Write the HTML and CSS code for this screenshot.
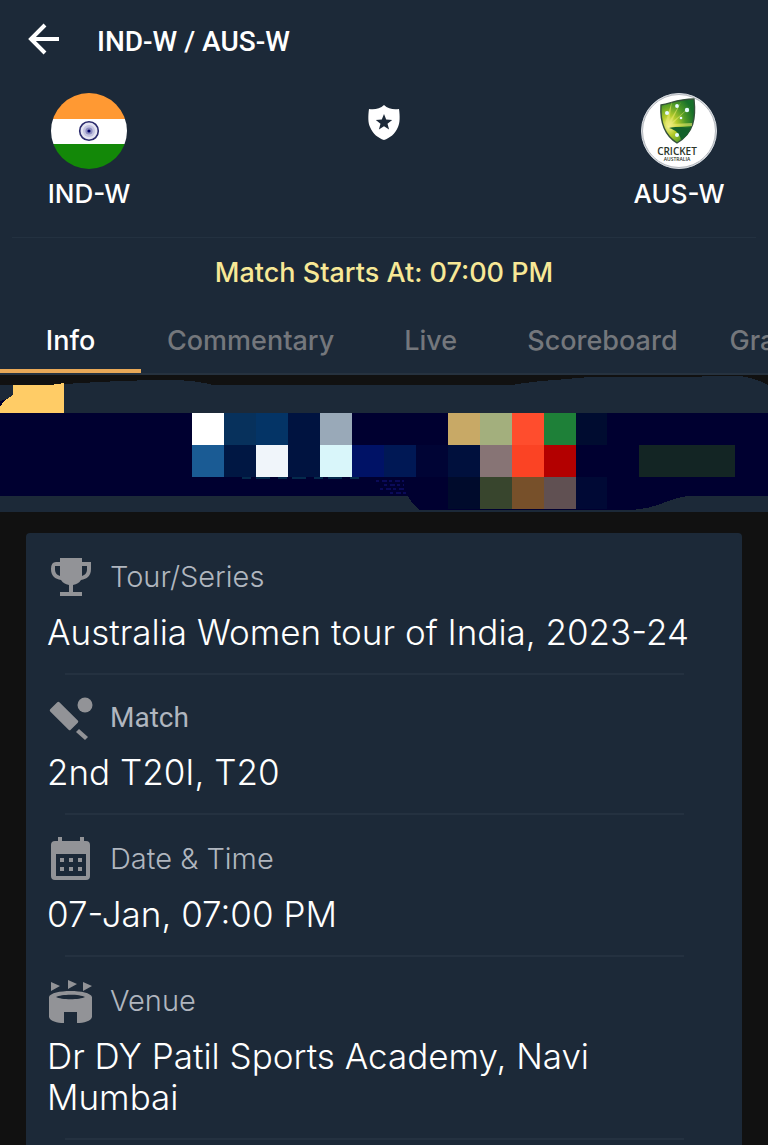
FILE: index.html
```html
<!DOCTYPE html>
<html lang="en">

<head>
    <meta charset="UTF-8">
    <meta name="viewport" content="width=device-width, initial-scale=1.0">
    <title>IND-W / AUS-W</title>
    <link rel="stylesheet" href="styles.css">
</head>

<body>
    <header class="header">
        <!-- Title bar -->
        <div class="topbar">
            <button type="button" class="back-btn" aria-label="Back">
                <svg width="32" height="32" viewBox="0 0 32 32" fill="none" stroke="#fff" stroke-width="4">
                    <path d="M32 16H4M18 2L4 16l14 14" />
                </svg>
            </button>
            <h1 class="title">IND-W / AUS-W</h1>
        </div>

        <!-- Teams -->
        <div class="teams">
            <div class="team">
                <svg class="flag" viewBox="0 0 76 76">
                    <clipPath id="round"><circle cx="38" cy="38" r="38" /></clipPath>
                    <g clip-path="url(#round)">
                        <path fill="#ff9933" d="M0 0h76v26H0z" />
                        <path fill="#fff" d="M0 26h76v25H0z" />
                        <path fill="#138808" d="M0 51h76v25H0z" />
                    </g>
                    <circle cx="38" cy="38" r="9.3" fill="#e4e4f1" stroke="#29296b" stroke-width="1.6" />
                    <circle cx="38" cy="38" r="6" fill="#c3c3e0" />
                    <circle cx="38" cy="38" r="3.6" fill="#8c8cc0" />
                    <circle cx="38" cy="38" r="1.6" fill="#000066" />
                </svg>
                <span class="team-name">IND-W</span>
            </div>
            <svg class="shield" width="32" height="36" viewBox="0 0 32 36">
                <path fill="#fff" d="M16 0C20 4 26 5 31 4C32 11 32 18 30 22C27 29 22 33 16 35C10 33 5 29 2 22C0 18 0 11 1 4C6 5 12 4 16 0Z" />
                <path fill="#1c2938" d="M16 9l2.200 5.600 6 .3-4.700 3.800 1.600 5.800-5.100-3.300-5.100 3.300 1.600-5.800L7.800 14.900l6-.3z" />
            </svg>
            <div class="team">
                <svg class="flag" viewBox="0 0 76 76">
                    <defs>
                        <radialGradient id="glow" cx="0.25" cy="0.6" r="0.75">
                            <stop offset="0" stop-color="#fbf7a0" />
                            <stop offset="0.3" stop-color="#b5cc2b" />
                            <stop offset="0.65" stop-color="#4f9a26" />
                            <stop offset="1" stop-color="#17702a" />
                        </radialGradient>
                    </defs>
                    <circle cx="38" cy="38" r="37.5" fill="#fff" stroke="#d5dadf" />
                    <circle cx="38" cy="38" r="36.5" fill="none" stroke="#7d858e" stroke-width="0.6" />
                    <path fill="url(#glow)" stroke="#34513a" stroke-width="1.4" d="M20 12C31 10 37 6 53 6C55 25 53 40 36 50C23 42 19 28 20 12Z" />
                    <path fill="#e8e86b" opacity="0.6" d="M24 31L31 8l-3 21L40 9 30 30l20-17-19 18 20-1v3l-22 1z" />
                    <path fill="#14622b" d="M28 35c8-2 15 0 22-1-2 6-5 10-10 13-1-6-5-10-12-12z" />
                    <g fill="#e6fbff">
                        <circle cx="36" cy="13" r="1.9" />
                        <circle cx="46" cy="17" r="2.2" />
                        <circle cx="26" cy="20" r="2" />
                        <circle cx="40" cy="25" r="1.3" />
                        <circle cx="36" cy="42" r="2" />
                    </g>
                    <text class="logo-text" x="36" y="62" font-size="10">CRICKET</text>
                    <text class="logo-text" x="36" y="68" font-size="5">AUSTRALIA</text>
                </svg>
                <span class="team-name">AUS-W</span>
            </div>
        </div>

        <p class="start-time">Match Starts At: 07:00 PM</p>

        <!-- Tabs -->
        <nav class="tabs">
            <button type="button" class="tab active">Info</button>
            <button type="button" class="tab">Commentary</button>
            <button type="button" class="tab">Live</button>
            <button type="button" class="tab">Scoreboard</button>
            <button type="button" class="tab">Graphs</button>
        </nav>
    </header>

    <!-- Pixelated banner -->
    <svg class="banner" viewBox="0 0 768 137" shape-rendering="crispEdges">
        <path fill="#111" d="M0 0h768v137H0z" />
        <path fill="#1c2938" d="M0 10H50Q120 5 170 5Q195 5 213 10H512Q535 6 555 5L590 2Q680 2 740 1Q755 3 768 10V137H0z" />
        <path fill="#000030" d="M0 20h12v18h756v83h-80c-20 2-30 13-58 14H420q-6-3-12-14H0z" />
        <path fill="#1c2938" d="M0 10h13v12L0 26z" />
        <path fill="#ffcc66" d="M13 10h37l14-2v30H0v-6q4-7 13-12z" />
        <path fill="#fff" d="M192 38h32v32h-32z" />
        <path fill="#07315c" d="M224 38h32v32h-32z" />
        <path fill="#043466" d="M256 38h32v32h-32z" />
        <path fill="#001340" d="M288 38h32v64h-32z" />
        <path fill="#99a9b8" d="M320 38h32v32h-32z" />
        <path fill="#1a5b94" d="M192 70h32v32h-32z" />
        <path fill="#001743" d="M224 70h32v32h-32z" />
        <path fill="#f0f5fa" d="M256 70h32v32h-32z" />
        <path fill="#d9f6fa" d="M320 70h32v32h-32z" />
        <path fill="#001266" d="M352 70h32v32h-32z" />
        <path fill="#001855" d="M384 70h32v32h-32z" />
        <path fill="#000435" d="M416 70h32v32h-32z" />
        <path fill="#00103d" d="M448 70h32v32h-32z" />
        <path fill="#c8a966" d="M448 38h32v32h-32z" />
        <path fill="#a3af7d" d="M480 38h32v32h-32z" />
        <path fill="#ff4d2d" d="M512 38h32v32h-32z" />
        <path fill="#1e8038" d="M544 38h32v32h-32z" />
        <path fill="#000c30" d="M576 38h31v32h-31z" />
        <path fill="#877475" d="M480 70h32v32h-32z" />
        <path fill="#fb4324" d="M512 70h32v32h-32z" />
        <path fill="#b30000" d="M544 70h32v32h-32z" />
        <path fill="#000b2c" d="M448 102h32v32h-32z" />
        <path fill="#38452d" d="M480 102h32v32h-32z" />
        <path fill="#77502a" d="M512 102h32v32h-32z" />
        <path fill="#605052" d="M544 102h32v32h-32z" />
        <path fill="#000935" d="M576 102h31v32h-31z" />
        <path fill="#132524" d="M639 70h96v32h-96z" />
        <path fill="none" stroke="#042a4c" stroke-width="2" stroke-dasharray="9 5 14 8" d="M242 103h118" />
        <path fill="none" stroke="#0a0a58" stroke-width="2" stroke-dasharray="3 3 5 2" d="M376 106h28M384 110h20M380 114h24M390 118h16" />
    </svg>

    <!-- Match info -->
    <main class="card">
        <section class="row">
            <h2 class="label">
                <svg class="icon" viewBox="0 0 44 44">
                    <path fill-rule="evenodd" d="M13 4h22v4h9v7c0 7-4 10-10 11-2 3-4 4-8 5v7h9v4H13v-4h9v-7c-4-1-6-2-8-5C8 25 4 22 4 15q0-7 5-7h4zM13 12H8v3c0 4 2 6 5 7zM35 12v10c3-1 5-3 5-7v-3z" />
                </svg>
                Tour/Series
            </h2>
            <p class="value">Australia Women tour of India, 2023-24</p>
        </section>
        <section class="row">
            <h2 class="label label-match">
                <svg class="icon" viewBox="0 0 44 44">
                    <circle cx="38" cy="10" r="7.5" />
                    <rect x="-14.5" y="-6.5" width="29" height="13" rx="1.5" transform="translate(17 21) rotate(45)" />
                    <path d="M32 34l9 8-3 3-9-8z" />
                </svg>
                Match
            </h2>
            <p class="value">2nd T20I, T20</p>
        </section>
        <section class="row">
            <h2 class="label">
                <svg class="icon" viewBox="0 0 44 44">
                    <path fill-rule="evenodd" d="M11 1h4v4h18V1h4v4h2q4 0 4 4v31q0 4-4 4H8q-4 0-4-4V9q0-4 4-4h3zM9 18v22h30V18z" />
                    <path d="M13 22h4v4h-4zM22 22h4v4h-4zM31 22h4v4h-4zM13 31h4v4h-4zM22 31h4v4h-4zM31 31h4v4h-4z" />
                </svg>
                Date &amp; Time
            </h2>
            <p class="value">07-Jan, 07:00 PM</p>
        </section>
        <section class="row">
            <h2 class="label">
                <svg class="icon" viewBox="0 0 44 44">
                    <path d="M4 4l9 4-9 5zM21 2l9 4-9 5zM36 4l9 4-9 5z" />
                    <path fill-rule="evenodd" d="M2 19C4 11 43 11 45 19V39C44 43 37 45 30 45V34H17V45C10 45 3 43 2 39zM9 19C14 22 33 22 38 19C33 16 14 16 9 19z" />
                </svg>
                Venue
            </h2>
            <p class="value">Dr DY Patil Sports Academy, Navi Mumbai</p>
        </section>
    </main>
</body>

</html>
```

FILE: styles.css
```css
* {
    box-sizing: border-box;
}

body {
    font-family: 'Inter', sans-serif;
    margin: 0;
    min-height: 100vh;
    display: flex;
    flex-direction: column;
    background-color: #111;
    color: #fff;
    overflow-x: hidden;
}

h1,
h2,
p {
    margin: 0;
}

button {
    font-family: inherit;
    background: none;
    border: none;
    padding: 0;
    cursor: pointer;
}

.header {
    background-color: #1c2938;
}

.topbar {
    display: flex;
    align-items: center;
    gap: 38px;
    height: 77px;
    padding: 0 27px;
}

.back-btn,
.back-btn svg {
    display: block;
}

.title {
    font-family: 'Roboto', sans-serif;
    font-size: 28px;
    font-weight: 500;
    line-height: 36px;
    padding-top: 6px;
}

.teams {
    display: flex;
    justify-content: space-between;
    align-items: flex-start;
    margin: 0 12px;
    padding: 16px 20px 26px;
    border-bottom: 1px solid #233140;
}

.team {
    width: 114px;
    display: flex;
    flex-direction: column;
    align-items: center;
    gap: 8px;
}

.flag {
    width: 76px;
    height: 76px;
}

.shield {
    margin-top: 12px;
}

.logo-text {
    font-family: 'Open Sans', sans-serif;
    font-weight: 600;
    fill: #2b3528;
    text-anchor: middle;
}

.team-name {
    font-size: 26px;
    font-weight: 500;
    line-height: 34px;
}

.start-time {
    padding: 18px 0;
    color: #f7e896;
    font-size: 27px;
    font-weight: 500;
    line-height: 34px;
    text-align: center;
}

.tabs {
    display: flex;
    overflow: hidden;
    border-bottom: 2px solid #26323f;
}

.tab {
    flex: none;
    min-width: 141px;
    height: 65px;
    padding: 4px 26px 0;
    border-bottom: 4px solid transparent;
    color: #74777c;
    font-size: 27px;
    font-weight: 500;
}

.tab.active {
    color: #fff;
    border-bottom-color: #e8a857;
}

.banner {
    display: block;
    width: 100%;
}

.card {
    flex: 1;
    margin: 21px 26px 0;
    padding: 0 21px;
    background-color: #1c2938;
    border-radius: 4px 4px 0 0;
}

.row {
    padding-top: 21px;
}

/* divider, inset from the text */
.row::after {
    content: "";
    display: block;
    height: 2px;
    margin: 20px 37px 0 18px;
    background-color: #243140;
}

.label {
    display: flex;
    align-items: center;
    gap: 19px;
    height: 44px;
    color: #b0b6bf;
    font-size: 29px;
    font-weight: 300;
}

.label-match {
    height: 42px;
    font-family: 'Roboto', sans-serif;
    font-size: 28px;
    font-weight: 400;
}

.icon {
    flex: none;
    width: 44px;
    height: 44px;
    fill: #929397;
    overflow: visible;
}

.value {
    margin-top: 14px;
    padding-right: 30px;
    font-size: 35px;
    font-weight: 300;
    line-height: 41px;
}
```
